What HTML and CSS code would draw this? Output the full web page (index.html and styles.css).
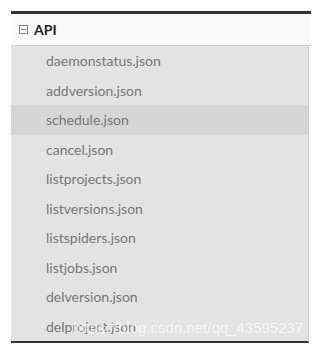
FILE: index.html
```html
<!DOCTYPE html>
<html>
    <head>
        <meta charset="UTF-8">
        <title>API</title>
        <link rel="stylesheet" href="styles.css">
    </head>
    <body>
        <div class="panel">
            <div class="header">
                <svg class="toggle" width="9" height="9" viewBox="0 0 9 9">
                    <rect x="0.5" y="0.5" width="8" height="8" fill="none" stroke="#666" stroke-width="0.8"/>
                    <line x1="2" y1="4.5" x2="7" y2="4.5" stroke="#666" stroke-width="0.8"/>
                </svg>
                <span>API</span>
            </div>
            <div class="list">
                <div class="item">daemonstatus.json</div>
                <div class="item">addversion.json</div>
                <div class="item active">schedule.json</div>
                <div class="item">cancel.json</div>
                <div class="item">listprojects.json</div>
                <div class="item">listversions.json</div>
                <div class="item">listspiders.json</div>
                <div class="item">listjobs.json</div>
                <div class="item">delversion.json</div>
                <div class="item">delproject.json</div>
                <div class="watermark">https://blog.csdn.net/qq_43595237</div>
            </div>
        </div>
    </body>
</html>
```

FILE: styles.css
```css
html, body {
    margin: 0px;
    padding: 0px;
    background-color: #fff;
}

body {
    padding: 11px 2px 0px 11px;
}

.panel {
    width: 300px;
    border-top: 3px solid #333;
    font-family: Lato, "Open Sans", sans-serif;
}

.header {
    display: flex;
    align-items: center;
    gap: 6px;
    height: 31px;
    padding-left: 8px;
    background-color: #fafafa;
    border-bottom: 1px solid #cfcfcf;
    color: #222;
    font-size: 14px;
    font-weight: bold;
}

.toggle {
    display: block;
}

.list {
    position: relative;
    width: 297px;
    background-color: #e3e3e3;
    border-right: 1px solid #cfcfcf;
    border-bottom: 2px solid #333;
}

.item {
    height: 29.5px;
    line-height: 29.5px;
    padding-left: 35px;
    color: #777;
    font-size: 14px;
}

.item.active {
    background-color: #d6d6d6;
}

.watermark {
    position: absolute;
    left: 62px;
    bottom: 5px;
    color: rgba(255, 255, 255, 0.7);
    font-family: "Liberation Sans", Arial, sans-serif;
    font-size: 15px;
}
```
